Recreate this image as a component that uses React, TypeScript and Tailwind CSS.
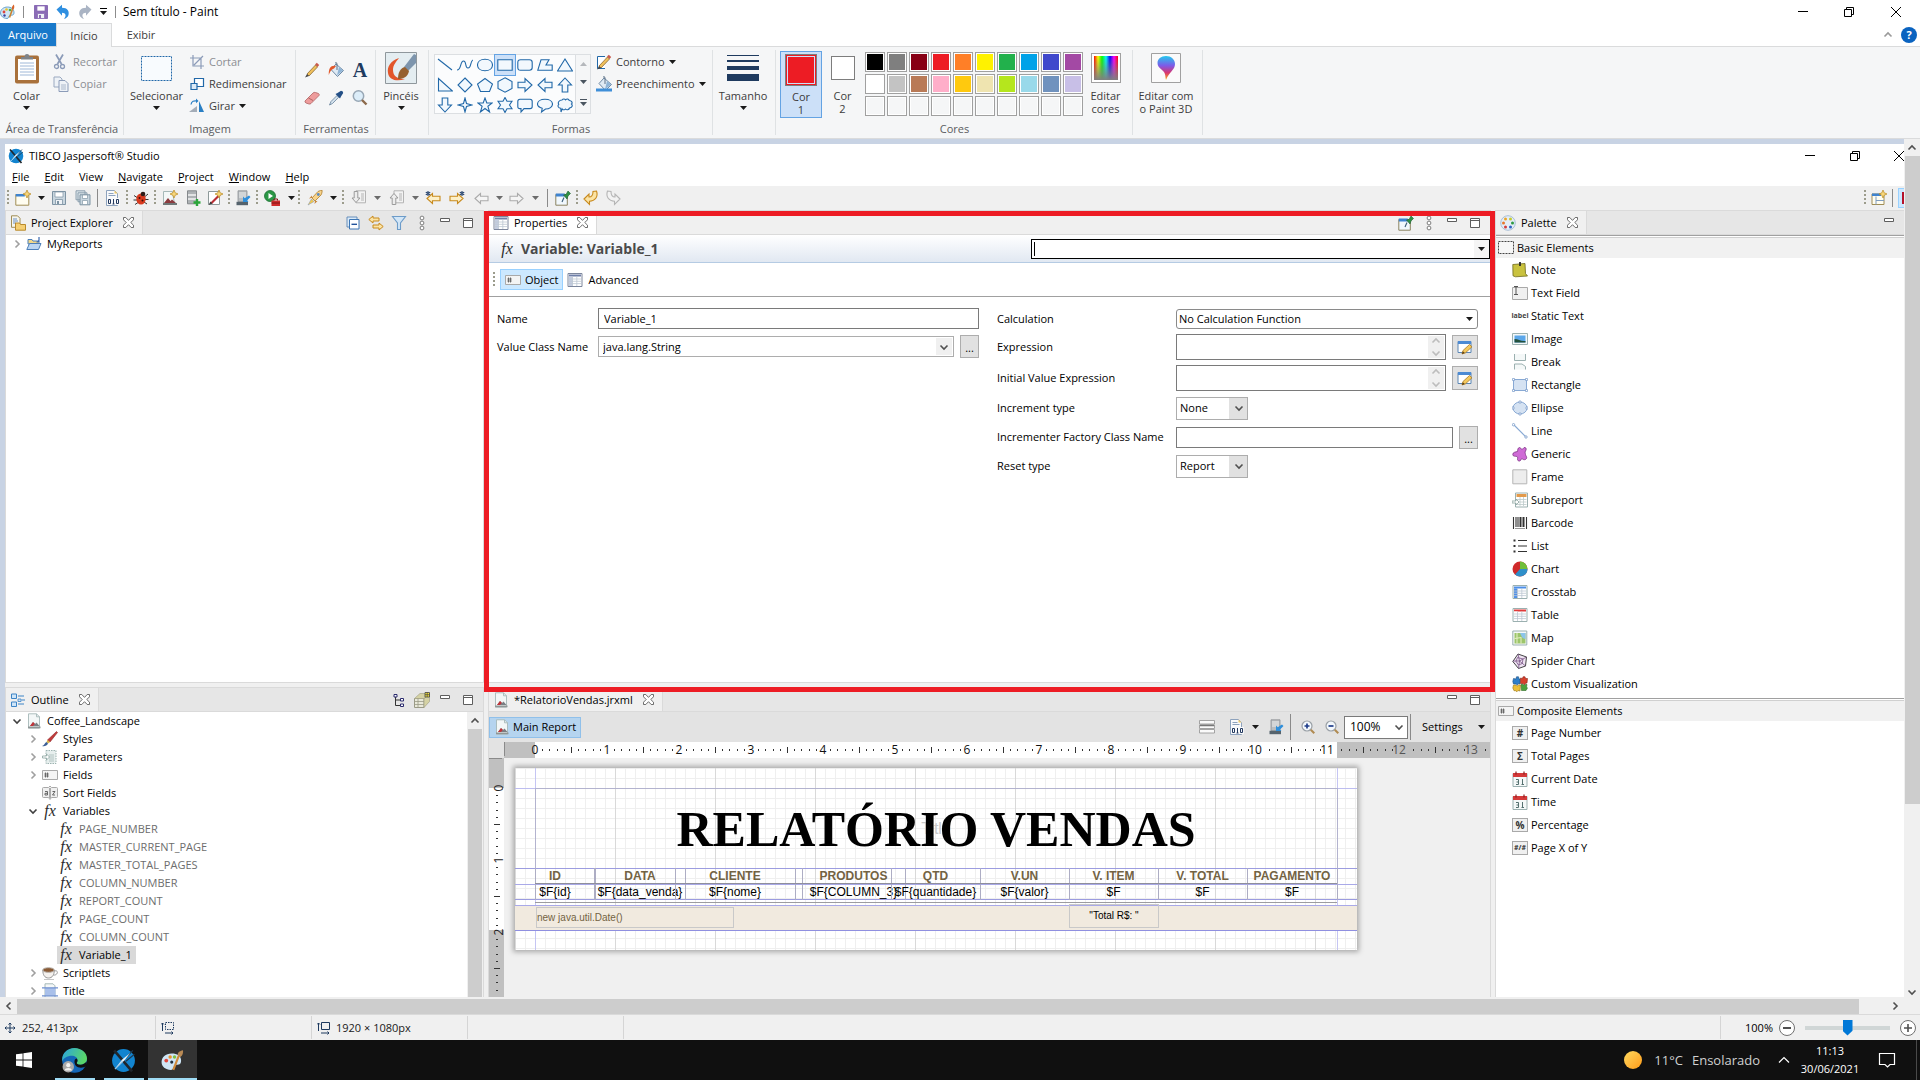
import React from "react";
import type { ReactNode } from "react";

/* ---------- drawing helpers ---------- */

const Ico = ({ children, s = 16, vb = "0 0 16 16" }: { children: ReactNode; s?: number; vb?: string }) => (
  <svg width={s} height={s} viewBox={vb} fill="none" className="shrink-0" aria-hidden="true">
    {children}
  </svg>
);

const Down = ({ color = "#1a1a1a" }: { color?: string }) => (
  <svg width="7" height="4" viewBox="0 0 7 4" className="shrink-0" aria-hidden="true">
    <path d="M0 0h7L3.5 4z" fill={color} />
  </svg>
);

const Chevron = ({ dir, color = "#505050" }: { dir: "up" | "down" | "left" | "right"; color?: string }) => {
  const d = {
    up: "M1.5 6.5 5 3l3.500 3.500",
    down: "M1.500 3.500 5 7l3.500-3.500",
    left: "M6.500 1.500 3 5l3.500 3.500",
    right: "M3.500 1.500 7 5 3.500 8.500",
  }[dir];
  return (
    <svg width="10" height="10" viewBox="0 0 10 10" fill="none" className="shrink-0" aria-hidden="true">
      <path d={d} stroke={color} strokeWidth="1.600" />
    </svg>
  );
};

const CloseX = () => (
  <svg width="11" height="11" viewBox="0 0 11 11" fill="#fff" className="shrink-0" aria-hidden="true">
    <path
      d="M.5.5h2.300L5.500 3.400 8.200.5h2.300v2.300L7.800 5.500l2.700 2.700v2.300H8.200L5.500 7.700 2.800 10.500H.5V8.200l2.700-2.700L.5 2.800z"
      stroke="#5c5c5c"
      strokeWidth="0.900"
    />
  </svg>
);

const Palette = () => (
  <Ico>
    <path d="M7.500 3C3.500 3 .5 5.500.5 8.800S3.500 14.500 7 14.500c2 0 1.200-2 2.500-2.800 1.400-.9 4.500.3 4.500-3C14 5 11 3 7.500 3z" fill="#cfe6f6" stroke="#4b90c2" strokeWidth=".8" />
    <circle cx="4" cy="8" r="1.400" fill="#e0463c" />
    <circle cx="6.500" cy="5.500" r="1.300" fill="#e9c22b" />
    <circle cx="10" cy="6" r="1.300" fill="#4fae46" />
    <circle cx="4.500" cy="11.500" r="1.200" fill="#3a3f9f" />
    <path d="M9.500 13.500 12.500 5" stroke="#c98231" strokeWidth="1.600" />
    <path d="M12 5c-.6-2 .6-3 1.800-4.500.7 1.500.8 3.500-.3 5z" fill="#d9642a" />
  </Ico>
);

const Jasper = ({ s = 16 }: { s?: number }) => (
  <Ico s={s}>
    <circle cx="8" cy="8" r="7.300" fill="#1284cf" />
    <path d="M14 1.500 9.500 6.500M15 4 9.500 8.500" stroke="#1d3a52" strokeWidth=".8" />
    <path d="M2 1.500 13.500 15" stroke="#20262c" strokeWidth="1.700" />
    <path d="M12.500 3 8.500 8 2.500 13.500 7 7.500z" fill="#e8f4fb" />
    <path d="M7.500 8.500 2.500 13.500" stroke="#9fc9e6" strokeWidth=".8" />
  </Ico>
);

const Save = ({ color = "#8a6bb5", fill = "#8a6bb5" }: { color?: string; fill?: string }) => (
  <Ico>
    <path d="M1.500 1.500h13v13h-13z" fill={fill} stroke={color} />
    <path d="M4 2h8v5H4z" fill="#fff" stroke={color} strokeWidth=".7" />
    <path d="M4.500 9.500h7v5h-7z" fill="#eef2f6" stroke={color} strokeWidth=".8" />
    <path d="M6 11h2v3H6z" fill={color} />
  </Ico>
);

const SaveAll = () => (
  <Ico>
    <path d="M1 .8h9v9H1zM3 2.800h9v9H3z" fill="#dbe4ea" stroke="#8499a8" strokeWidth=".9" />
    <path d="M5 4.800h10v10H5z" fill="#c9d6df" stroke="#7d93a3" />
    <path d="M7.500 5h5v3.500h-5zM7.500 10.500h5v4h-5z" fill="#fff" stroke="#8499a8" strokeWidth=".7" />
  </Ico>
);

const Arrow = ({ flip, color }: { flip?: boolean; color: string }) => (
  <Ico>
    <g transform={flip ? "translate(16 0) scale(-1 1)" : undefined}>
      <path d="M1.500 5.500 7 .8v3c5.500 0 7.500 3.500 6.500 7.200-.6 2-2.500 3.500-4.500 4 2.600-3 2-6.200-2-6.200v3z" fill={color} />
    </g>
  </Ico>
);

const Doc = ({ children }: { children?: ReactNode }) => (
  <Ico>
    <path d="M2.500.8h8l3 3v11.400h-11z" fill="#f3f7f7" stroke="#a5b8b8" strokeWidth=".9" />
    <path d="M10.500.8v3h3" stroke="#a5b8b8" strokeWidth=".9" />
    {children}
  </Ico>
);

const Report = () => (
  <Doc>
    <path d="m4 13 3-4 2 2 1.500-1.500 3 3.500z" fill="#7a7f83" />
    <path d="m4 13 3-4 1.800 1.800L7 13z" fill="#c2343a" />
    <path d="M2 13.500h12.500v1.700H2z" fill="#8f9696" />
  </Doc>
);

const Doc010 = () => (
  <Ico>
    <path d="M2.500.5h8l3 3v12h-11z" fill="#f8f9fb" stroke="#8da2bd" />
    <path d="M10.500.5v3h3z" fill="#f0c969" />
    <path d="M4.500 3.500h5M4.500 5.500h7" stroke="#8da2bd" />
    <path d="M3.200 8h12.600v7H3.200z" fill="#f8f9fb" />
    <path d="M4.500 9.500h2v4h-2zM9.500 9v5M8.500 14h2M12.500 9.500h2v4h-2z" stroke="#23395f" />
  </Ico>
);

const Computer = () => (
  <Ico>
    <path d="M3 .8h9v11H3z" fill="#b9bdc0" stroke="#8b9094" strokeWidth=".8" />
    <path d="M4 3h7M4 5h7M4 7h7" stroke="#eceeef" />
    <path d="M1.500 11.800h11.500v3.400H1.500z" fill="#55636d" />
    <path d="m14 5.500 1.500 1.500-3.500 3.500 1.500 1.500H8V6.500L9.700 8.200z" fill="#2f8fdb" />
  </Ico>
);

const Pin = () => (
  <Ico>
    <path d="M.8 4.500h11.500v10.700H.8z" fill="#f1f8fd" stroke="#8a8360" />
    <path d="M.8 3.500h9v3h-9z" fill="#3e83cf" />
    <path d="m7 12 2-4.500" stroke="#3b5c78" strokeWidth="1.100" />
    <path d="m8.500 5 2.500-.5L13 1l2.500 2.500-2.500 2.500-1 3z" fill="#2e8f46" stroke="#20622f" strokeWidth=".6" />
  </Ico>
);

const Dots = () => (
  <Ico>
    <g stroke="#707070" strokeWidth=".9" fill="#fff">
      <circle cx="8" cy="3" r="1.900" />
      <circle cx="8" cy="8" r="1.900" />
      <circle cx="8" cy="13" r="1.900" />
    </g>
  </Ico>
);
const Min = () => (
  <Ico>
    <path d="M3.500 3.500h9v3h-9z" fill="#fff" stroke="#5e5e5e" />
  </Ico>
);
const Max = () => (
  <Ico>
    <path d="M3.500 3.500h9v9h-9z" fill="#fff" stroke="#5e5e5e" />
    <path d="M3.500 5.500h9" stroke="#5e5e5e" />
  </Ico>
);

const Fx = () => <span className="w-4 shrink-0 text-center font-['Liberation_Serif',serif] text-[16px] leading-4 text-[#2c2c2c] italic">fx</span>;

const HashField = () => (
  <Ico>
    <path d="M.5 3.500h15v9H.5z" fill="#f4f4f4" stroke="#a9a9a9" />
    <path d="M3.500 5.500v5M5.500 5.500v5M2.300 7h4.500M2.300 9h4.500" stroke="#555" strokeWidth=".8" />
  </Ico>
);

const GridIcon = ({ head = "#6f7fa8", side = "#c5cde0", border = "#7c869c" }: { head?: string; side?: string; border?: string }) => (
  <Ico>
    <path d="M1 1.500h14v13H1z" fill="#fff" stroke={border} />
    <path d="M2 2.500h12v2H2z" fill={head} />
    <path d="M2 4.500h3.500V14H2z" fill={side} />
    <path d="M2 7h12M2 9.300h12M2 11.600h12M5.500 4.500V14M9.800 4.500V14" stroke="#bcc6d2" strokeWidth=".8" />
  </Ico>
);

/* ---------- Paint ribbon ---------- */

const Drop = () => (
  <span className="flex h-3 items-center justify-center">
    <Down />
  </span>
);

const Group = ({ label, width, children }: { label: string; width: string; children: ReactNode }) => (
  <section className={`relative flex shrink-0 flex-col pb-[1px] ${width}`}>
    <div className="flex flex-1">{children}</div>
    <div className="h-4 text-center text-[#5a5c60]">{label}</div>
    <i className="absolute top-[2px] right-0 bottom-[3px] w-px bg-[#dfe2e4]" />
  </section>
);

const BigButton = ({ icon, lines, drop, className = "" }: { icon: ReactNode; lines: string[]; drop?: boolean; className?: string }) => (
  <button className={`flex shrink-0 flex-col items-center pt-[3px] leading-[13px] ${className}`}>
    <span className="flex h-[38px] items-center justify-center pb-1">{icon}</span>
    {lines.map((l) => (
      <span key={l} className="whitespace-nowrap">{l}</span>
    ))}
    {drop && <Drop />}
  </button>
);

const SmallButton = ({ icon, label, drop, muted }: { icon: ReactNode; label: string; drop?: boolean; muted?: boolean }) => (
  <button className={`flex h-[22px] items-center gap-1 whitespace-nowrap ${muted ? "text-[#8c8e93]" : "text-[#3c3c3c]"}`}>
    {icon}
    {label}
    {drop && <Down />}
  </button>
);

const shapes = [
  "M1 2l14 11",
  "M0 13c4.500 0 3-9 6.500-9s1 7 4.500 7 2-7 5-8",
  "M8 2.200c4.500 0 7.500 2.400 7.500 5.800s-3 5.800-7.500 5.800S.5 11.400.5 8s3-5.800 7.500-5.800z",
  "M.8 2.800h14.400v10.400H.8z",
  "M3.500 2.800h9q2.700 0 2.700 2.700v5q0 2.700-2.700 2.700h-9Q.8 13.200.8 10.500v-5Q.8 2.800 3.500 2.800z",
  "M4 2.800h8L9 8h6.200v5.200H.8z",
  "M8 2 15.500 14H.5z",
  "M1.500 1.500v12.500h14z",
  "M8 1 15 8 8 15 1 8z",
  "M8 1.500l7.500 5.500-3 7.500h-9L.5 7z",
  "M8 .8l7 3.700v7l-7 3.700-7-3.700v-7z",
  "M1 5.200h7V1.500L15 8l-7 6.500v-3.700H1z",
  "M15 5.200H8V1.500L1 8l7 6.500v-3.700h7z",
  "M5.200 15V8H1.500L8 1l6.500 7h-3.700v7z",
  "M5.200 1v7H1.500L8 15l6.500-7h-3.700V1z",
  "M8 1 9.500 6.500 15 8 9.500 9.500 8 15 6.500 9.500 1 8 6.500 6.500z",
  "M8 1 9.800 6h5.400l-4.300 3.300L12.600 15 8 11.500 3.400 15l1.700-5.700L.8 6h5.400z",
  "M8 .5 10 4.300h5L12.500 8l2.500 3.700h-5L8 15.500l-2-3.800H1L3.500 8 1 4.300h5z",
  "M3 2.200h10q2.200 0 2.200 2.200v5q0 2.200-2.200 2.200H7L4 15v-3.400H3Q.8 11.600.8 9.400v-5Q.8 2.200 3 2.200z",
  "M8 2.200c4.500 0 7.500 2.100 7.500 4.900s-3 4.900-7 4.900L4.500 15l.7-3.700C2.500 10.500.5 9.200.5 7.100c0-2.800 3-4.900 7.500-4.900z",
  "M5 3c1-1.500 3-1.200 3.500-.2C10 1.500 12 2 12.200 3.500 14.800 3.500 15.800 6 14.500 7c1.500 1.500.5 4-2 4-.5 2-3 2.200-4 1-1 1.200-2.700 1-3.300 0L4 15l-.2-3.700C1.200 11.300.3 8.800 1.700 7.300.5 5.500 2.200 3 5 3z",
];

const swatches = [
  "bg-black", "bg-[#7f7f7f]", "bg-[#880015]", "bg-[#ed1c24]", "bg-[#ff7f27]", "bg-[#fff200]", "bg-[#22b14c]", "bg-[#00a2e8]", "bg-[#3f48cc]", "bg-[#a349a4]",
  "bg-white", "bg-[#c3c3c3]", "bg-[#b97a57]", "bg-[#ffaec9]", "bg-[#ffc90e]", "bg-[#efe4b0]", "bg-[#b5e61d]", "bg-[#99d9ea]", "bg-[#7092be]", "bg-[#c8bfe7]",
  ...Array(10).fill("bg-[#f5f6f7]"),
];

const PencilShape = () => (
  <g>
    <path d="m3 12 8.500-9 2 2L5 14z" fill="#f0c05c" stroke="#8a6a35" strokeWidth=".8" />
    <path d="M11 2.500 12.800.8 15.200 3 13.500 5z" fill="#c95a4c" />
    <path d="m1 15.500 2-3.500 2 2z" fill="#454545" />
  </g>
);

const BucketShape = () => (
  <g>
    <path d="M8 2 15.500 8.500 9.500 14.500 3 7.500z" fill="#dfeaf4" stroke="#6f8aa5" />
    <path d="M9 13.500 15 8.500 11 5z" fill="#8fb4d6" />
    <path d="M9 8V2Q9 0 7 1" stroke="#5e7388" />
  </g>
);

function Ribbon() {
  return (
    <header className="shrink-0 bg-white">
      <div className="flex h-[23px] items-center">
        <Palette />
        <i className="mx-[7px] h-3 w-px bg-[#8c8c8c]" />
        <div className="flex items-center gap-[6px] pl-[2px]">
          <button aria-label="Salvar"><Save /></button>
          <button aria-label="Desfazer"><Arrow color="#2f8fe0" /></button>
          <button aria-label="Refazer"><Arrow flip color="#aab4c4" /></button>
          <button aria-label="Personalizar" className="flex flex-col items-center gap-[2px] px-px">
            <i className="h-px w-[7px] bg-black" />
            <Down />
          </button>
        </div>
        <i className="mx-[7px] h-3 w-px bg-[#8c8c8c]" />
        <span className="flex-1 text-[12px] whitespace-nowrap text-black">Sem título - Paint</span>
        <div className="flex items-center text-black">
          <button aria-label="Minimizar" className="flex w-[46px] justify-center"><i className="h-px w-[10px] bg-black" /></button>
          <button aria-label="Restaurar" className="flex w-[46px] justify-center">
            <Ico s={12} vb="0 0 12 12"><path d="M1.500 3.500h7v7h-7zM3.500 3.500v-2h7v7h-2" stroke="#000" /></Ico>
          </button>
          <button aria-label="Fechar" className="flex w-12 justify-center">
            <Ico s={12} vb="0 0 12 12"><path d="m1 1 10 10M11 1 1 11" stroke="#000" /></Ico>
          </button>
        </div>
      </div>
      <div className="flex h-6 items-stretch border-b border-[#dadbdc] text-[#3c3c3c]">
        <button className="w-14 bg-[#1979ca] text-white">Arquivo</button>
        <button className="-mb-px w-14 border-x border-t border-[#dadbdc] bg-[#f5f6f7]">Início</button>
        <button className="w-[58px]">Exibir</button>
        <div className="flex flex-1 items-center justify-end gap-2 pr-[3px]">
          <Chevron dir="up" color="#9a9a9a" />
          <button aria-label="Ajuda" className="flex size-4 items-center justify-center rounded-full bg-[#0a63c0] font-bold text-white">?</button>
        </div>
      </div>
      <div className="flex h-[92px] border-b border-[#dadbdc] bg-[#f5f6f7] pt-px text-[#3c3c3c]">
        <Group label="Área de Transferência" width="w-[124px]">
          <BigButton
            className="w-[53px]"
            lines={["Colar"]}
            drop
            icon={
              <svg width="26" height="31" viewBox="0 0 26 31" aria-hidden="true">
                <rect x="1" y="2.500" width="24" height="28" rx="2" fill="#a9713b" />
                <path d="M4 6h18v21H4z" fill="#fff" />
                <path d="M6 10h14M6 13h14M6 16h14M6 19h14M6 22h14" stroke="#9fb8d8" />
                <path d="M7 6.500V4h3.500q0-3 2.500-3t2.500 3H19v2.500z" fill="#7e8389" />
              </svg>
            }
          />
          <div className="flex flex-col pt-[3px]">
            <SmallButton muted label="Recortar" icon={<Ico><path d="M3 .5 8.500 10M10 .5 4.500 10" stroke="#8b9bb8" strokeWidth="1.700" /><circle cx="3.500" cy="12.500" r="2" stroke="#8b9bb8" strokeWidth="1.300" /><circle cx="9.500" cy="12.500" r="2" stroke="#8b9bb8" strokeWidth="1.300" /></Ico>} />
            <SmallButton muted label="Copiar" icon={<Ico><path d="M1 1h6l2 2v8H1z" fill="#eef2f7" stroke="#9aa9c0" /><path d="M6 4.500h6l3 3v8H6z" fill="#eef2f7" stroke="#8b9bb8" /><path d="M8 9h5M8 11h5M8 13h5" stroke="#9aa9c0" strokeWidth=".8" /></Ico>} />
          </div>
        </Group>
        <Group label="Imagem" width="w-[172px]">
          <BigButton
            className="w-[65px]"
            lines={["Selecionar"]}
            drop
            icon={<svg width="31" height="25" viewBox="0 0 31 25" aria-hidden="true"><path d="M.5.5h30v24H.5z" fill="#f8fbfe" stroke="#2168a8" strokeDasharray="2 1" /></svg>}
          />
          <div className="flex flex-col pt-[3px]">
            <SmallButton muted label="Cortar" icon={<Ico><path d="M4 1v11h11M1 4h11v11M5 11l9-9" stroke="#8b9bb8" strokeWidth="1.200" /></Ico>} />
            <SmallButton label="Redimensionar" icon={<Ico><path d="M5.500 2.500h9v8h-9z" fill="#fff" stroke="#2168a8" strokeWidth="1.200" /><path d="M2 7.500h6v6H2z" fill="#dcebf8" stroke="#2168a8" strokeWidth="1.200" /></Ico>} />
            <SmallButton drop label="Girar" icon={<Ico><path d="M10 3v11h5z" fill="#2a7fc4" /><path d="M8 14H0l8-6z" fill="#a4adb8" /><path d="M2 6.500C2.500 3 5 2.500 8 3" stroke="#2a7fc4" strokeWidth="1.200" /><path d="M7 .5 9.500 3 7 5.200z" fill="#2a7fc4" /></Ico>} />
          </div>
        </Group>
        <Group label="Ferramentas" width="w-[80px]">
          <div className="grid flex-1 grid-cols-3 content-start justify-items-center gap-y-3 px-1 pt-[14px]">
            <button aria-label="Lápis"><Ico><PencilShape /></Ico></button>
            <button aria-label="Preencher"><Ico><BucketShape /><path d="M8 4C3 3 .5 6 .8 13 2.500 9 3 7.500 6 6.500z" fill="#e2582a" /></Ico></button>
            <button className="font-['Liberation_Serif',serif] text-[20px] leading-4 font-bold text-[#1e3a5f]">A</button>
            <button aria-label="Borracha"><Ico><path d="M1 11 9 3q1-1 2.500-.5l3 1q1.200.8.5 2L7 13.500q-1 .8-2 .5l-3-1q-1.500-.8-1-2z" fill="#ee9c9c" stroke="#b06464" strokeWidth=".8" /><path d="m4.500 8 4.500 2.500" stroke="#b06464" /></Ico></button>
            <button aria-label="Selecionador de cores"><Ico><path d="m1.500 15 1.500-3.500L9 5.500 10.700 7.200 4.500 13.500z" fill="#d5e3ee" stroke="#627e98" strokeWidth=".8" /><path d="m7.500 4 2-1L13 .8Q15.500 1 15.200 3L13 6.500 12 8.500z" fill="#234f86" /></Ico></button>
            <button aria-label="Lupa"><Ico><circle cx="6.500" cy="6" r="5.200" fill="#dcedf9" stroke="#98a7b5" strokeWidth="1.500" /><path d="m10 10 4.500 4.500" stroke="#8c6a4b" strokeWidth="2.400" /></Ico></button>
          </div>
        </Group>
        <Group label="" width="w-[53px]">
          <BigButton
            className="w-[50px]"
            lines={["Pincéis"]}
            drop
            icon={
              <svg width="32" height="32" viewBox="0 0 32 32" aria-hidden="true">
                <path d="M.5.500h31v31H.5z" fill="#e4edf1" stroke="#8f979c" />
                <path d="M14 6C5 9 2 15 3 21c1 7 9 9 17 6-8 0-12-3-12-9 0-5 3-8 6-12z" fill="#e2562b" />
                <path d="M19 15 29 2l2 1v8L23 19z" fill="#7d95ad" />
                <path d="M13 27c0-6 2-11 7-12l4 4c-1 6-6 8-11 8z" fill="#96602f" />
              </svg>
            }
          />
        </Group>
        <Group label="Formas" width="w-[284px]">
          <div className="flex pt-[6px] pl-[5px]">
            <div className="grid h-[60px] grid-cols-7 border border-[#dcdfe2] bg-[#fbfcfd]">
              {shapes.map((d, i) => (
                <button key={d} aria-label={`Forma ${i + 1}`} className={`flex size-5 items-center justify-center ${i === 3 ? "bg-[#cce0f8] outline outline-[#64a3e3]" : ""}`}>
                  <Ico><path d={d} stroke="#2168a8" strokeWidth="1.100" fill={i < 2 ? "none" : "#f2f8fd"} /></Ico>
                </button>
              ))}
            </div>
            <div className="flex h-[60px] w-[15px] flex-col items-center justify-around border border-l-0 border-[#dcdfe2]">
              <span className="rotate-180"><Down color="#b5b8bc" /></span>
              <Down color="#4a5560" />
              <span className="flex flex-col gap-[2px]"><i className="h-px w-[7px] bg-[#4a5560]" /><Down color="#4a5560" /></span>
            </div>
          </div>
          <div className="flex flex-col pt-[3px] pl-[5px]">
            <SmallButton drop label="Contorno" icon={<Ico><path d="M9 2.500H1.500v12H9" stroke="#2168a8" fill="#fff" /><PencilShape /></Ico>} />
            <SmallButton drop label="Preenchimento" icon={<Ico><BucketShape /><path d="M0 12.500h16v3H0z" fill="#3f8fd8" /></Ico>} />
          </div>
        </Group>
        <Group label="" width="w-[63px]">
          <BigButton
            className="w-[60px]"
            lines={["Tamanho"]}
            drop
            icon={
              <span className="flex w-8 flex-col gap-[4px]">
                <i className="h-px bg-[#1e3a5f]" /><i className="h-[2px] bg-[#1e3a5f]" /><i className="h-1 bg-[#1e3a5f]" /><i className="h-[7px] bg-[#1e3a5f]" />
              </span>
            }
          />
        </Group>
        <Group label="Cores" width="w-[357px]">
          <BigButton
            className="mt-[3px] ml-1 h-[67px] w-[42px] border border-[#64a3e3] bg-[#cce0f8] !pt-0"
            lines={["Cor", "1"]}
            icon={<i className="mt-[2px] size-8 border border-[#7d7d7d] bg-[#ed1c24] outline outline-offset-[-3px] outline-[#cce0f8]" />}
          />
          <BigButton className="w-[41px]" lines={["Cor", "2"]} icon={<i className="size-6 border border-[#7d7d7d] bg-white" />} />
          <div className="grid grid-cols-10 content-start gap-[2px] pt-1 pl-[2px]">
            {swatches.map((c, i) => (
              <button key={i} aria-label={`Cor ${i + 1}`} className="size-5 border border-[#a0a0a0] bg-white p-px"><i className={`block size-full ${c}`} /></button>
            ))}
          </div>
          <BigButton
            className="w-[45px]"
            lines={["Editar", "cores"]}
            icon={
              <i className="size-[30px] border border-[#a0a0a0] bg-white p-[2px]">
                <i className="block size-full bg-[linear-gradient(to_top,#808080,transparent),linear-gradient(to_right,#f00,#ff0,#0f0,#0ff,#00f,#f0f,#f00)]" />
              </i>
            }
          />
        </Group>
        <Group label="" width="w-[70px]">
          <BigButton
            className="w-[66px]"
            lines={["Editar com", "o Paint 3D"]}
            icon={
              <svg width="30" height="30" viewBox="0 0 30 30" aria-hidden="true">
                <defs>
                  <linearGradient id="p3d" x1="0" y1="0" x2="0" y2="1">
                    <stop offset="0" stopColor="#22c9ee" /><stop offset=".4" stopColor="#7d5be8" /><stop offset=".7" stopColor="#d8366f" /><stop offset="1" stopColor="#fbb117" />
                  </linearGradient>
                </defs>
                <path d="M.5.500h29v29H.5z" fill="#fafafa" stroke="#a0a0a0" />
                <path d="M15 3c5 0 9 3.500 9 8 0 6-6 8-9 16-1-4 0-7-4-10-3-2.500-4.500-4-4.500-7C6.500 6 10 3 15 3z" fill="url(#p3d)" />
              </svg>
            }
          />
        </Group>
      </div>
    </header>
  );
}

/* ---------- Studio window ---------- */

const Grip = () => (
  <svg width="2" height="16" viewBox="0 0 2 16" aria-hidden="true"><path d="M1 0v16" stroke="#9c9c8c" strokeWidth="2" strokeDasharray="2 2" /></svg>
);
const Sep = () => <i className="h-[18px] w-px bg-[#8a8a8a]" />;

const GoldArrow = ({ flip, star, color = "#c88a1d", fill = "#fdf0c8" }: { flip?: boolean; star?: boolean; color?: string; fill?: string }) => (
  <Ico>
    <g transform={flip ? "translate(16 0) scale(-1 1)" : undefined}>
      <path d="M2 8.500 7.500 3.500v2.700H15v4.600H7.500v2.700z" fill={fill} stroke={color} strokeWidth="1.100" />
      {star && <path d="M3 1v5M.8 2.200l4.400 2.600M5.200 2.200.8 4.800" stroke="#23406b" strokeWidth="1.100" />}
    </g>
  </Ico>
);
const HookArrow = ({ flip, color, fill }: { flip?: boolean; color: string; fill: string }) => (
  <Ico>
    <g transform={flip ? "translate(16 0) scale(-1 1)" : undefined}>
      <path d="M1 9 6 4v3c3 0 4-1.500 4-5.500L13.500 1c2 6-1.500 10-7 10.200v3.300z" fill={fill} stroke={color} strokeWidth="1.100" />
    </g>
  </Ico>
);
const Star = () => <path d="m12 0 1.200 2.800L16 4l-2.800 1.200L12 8l-1.200-2.800L8 4l2.800-1.200z" fill="#f6d67c" stroke="#b98a20" strokeWidth=".7" />;
const PageStep = ({ up }: { up?: boolean }) => (
  <Ico>
    <path d="M5 .8h9.500v12H5z" fill="#f3f3f3" stroke="#b4b4b4" />
    <path d="M10 4h3M10 6h3M10 8h3M10 10h3" stroke="#b4b4b4" />
    <path d={up ? "M5 3.500 9 8H6.800v6.500H3.200V8H1z" : "M5 12.500 9 8H6.800V1.500H3.200V8H1z"} fill="#ededed" stroke="#9b9b9b" />
  </Ico>
);

const toolbar: { w: string; node: ReactNode; name?: string }[] = [
  { w: "w-[6px]", node: <Grip /> },
  { w: "w-6", name: "New", node: <Ico><path d="M.8 4.500h13v10.700H.8z" fill="#fffdf0" stroke="#a08d55" /><path d="M.8 4h9v2.500h-9z" fill="#3e83cf" /><Star /></Ico> },
  { w: "w-3", name: "New options", node: <Down /> },
  { w: "w-6", name: "Save", node: <Save color="#7d93a3" fill="#c9d6df" /> },
  { w: "w-6", name: "Save all", node: <SaveAll /> },
  { w: "w-1", node: <Sep /> },
  { w: "w-[26px]", name: "Compile", node: <Doc010 /> },
  { w: "w-1", node: <Grip /> },
  { w: "w-6", name: "Debug", node: <Ico><path d="M1 5.500l3 2M15 4l-3 2.500M.5 10H4M15.500 9.500H12M2 14.500l3-2M14 14l-3-2" stroke="#333" /><ellipse cx="8" cy="9" rx="4.700" ry="5.500" fill="#d8391e" /><circle cx="10" cy="4" r="2.300" fill="#2e1a16" /><circle cx="6.500" cy="8" r="1" fill="#3a0f08" /><circle cx="9.500" cy="10.500" r="1" fill="#3a0f08" /></Ico> },
  { w: "w-1", node: <Grip /> },
  { w: "w-[26px]", name: "New report", node: <Ico><path d="M1.500 1.500h9l2 12.500h-11z" fill="#f3f7f7" stroke="#a5b8b8" /><path d="m2 13 4-5 2.500 3L10 9.500l4 3.500z" fill="#8b3a3e" /><path d="M1 13h14v2H1z" fill="#6f7777" /><Star /></Ico> },
  { w: "w-5", name: "New data adapter", node: <Ico><path d="M2.500.8h9v13h-9z" fill="#aeb2b5" stroke="#85898c" /><path d="M3 5h8M3 9h8" stroke="#f3f3f3" strokeWidth="1.300" /><path d="M12 9v7M8.500 12.500h7" stroke="#2ba53a" strokeWidth="2.400" /></Ico> },
  { w: "w-6", name: "New style", node: <Ico><path d="M1.500 1.500h11v13h-11z" fill="#fff" stroke="#8e9a9a" /><path d="m3 13 9-9 1.500 1.500L5 14z" fill="#b92f35" /><path d="m1.500 15 2-3.500 2 2z" fill="#3a3a3a" /><Star /></Ico> },
  { w: "w-1", node: <Grip /> },
  { w: "w-6", name: "Preview", node: <Computer /> },
  { w: "w-1", node: <Grip /> },
  { w: "w-[26px]", name: "Run", node: <Ico><circle cx="6" cy="6" r="5.500" fill="#2b9746" stroke="#1e7034" strokeWidth=".8" /><path d="m4.500 3 4.500 3-4.500 3z" fill="#fff" /><path d="M7.500 10.500H16V16H7.500z" fill="#cf2a2a" /><path d="M10 10.500V9h3.500v1.500M7.500 13H16" stroke="#7b1414" /></Ico> },
  { w: "w-3", name: "Run options", node: <Down /> },
  { w: "w-1", node: <Grip /> },
  { w: "w-7", name: "Launch", node: <Ico><path d="m5 8 6-6.500q3-1.500 4.200-1-.2 3-1.200 4.500L8 11z" fill="#f7d38c" stroke="#b98a3a" strokeWidth=".9" /><circle cx="11.300" cy="4.500" r="1.400" fill="#5b8bc4" /><path d="m5 8-3 .5L5 5.500zM8 11l-.5 3L10.500 11z" fill="#c8853a" /><path d="m1 15 3.500-6L7 11.500z" fill="#f6c948" stroke="#8fa0b3" strokeWidth=".6" /></Ico> },
  { w: "w-2", name: "Launch options", node: <Down /> },
  { w: "w-3", node: <Grip /> },
  { w: "w-5", name: "Next annotation", node: <PageStep /> },
  { w: "w-4", name: "Next options", node: <Down color="#6b6b6b" /> },
  { w: "w-6", name: "Previous annotation", node: <PageStep up /> },
  { w: "w-3", name: "Previous options", node: <Down color="#6b6b6b" /> },
  { w: "w-6", name: "Previous edit", node: <GoldArrow star /> },
  { w: "w-6", name: "Next edit", node: <GoldArrow flip star /> },
  { w: "w-6", name: "Back", node: <GoldArrow color="#ababab" fill="#f5f5f5" /> },
  { w: "w-3", name: "Back options", node: <Down color="#6b6b6b" /> },
  { w: "w-6", name: "Forward", node: <GoldArrow flip color="#ababab" fill="#f5f5f5" /> },
  { w: "w-3", name: "Forward options", node: <Down color="#6b6b6b" /> },
  { w: "w-3", node: <Sep /> },
  { w: "w-5", name: "Pin editor", node: <Pin /> },
  { w: "w-2", node: <Grip /> },
  { w: "w-5", name: "Undo", node: <HookArrow color="#c88a1d" fill="#fbe3a4" /> },
  { w: "w-6", name: "Redo", node: <HookArrow flip color="#b5b5b5" fill="#f3f3f3" /> },
];

const menus = ["File", "Edit", "View", "Navigate", "Project", "Window", "Help"];

function PanelHead({ icon, title, actions, tone = "bg-[#f0f0f0]", bar = "bg-[#e6e6e6]" }: { icon: ReactNode; title: string; actions: { name: string; node: ReactNode }[]; tone?: string; bar?: string }) {
  return (
    <div className={`flex h-[25px] shrink-0 items-stretch border-y border-[#dadada] ${bar}`}>
      <div className={`flex items-center gap-[5px] border-r border-[#dadada] pr-2 pl-1 whitespace-nowrap ${tone}`}>
        {icon}
        <span>{title}</span>
        <button aria-label={`Close ${title}`} className="ml-[5px]"><CloseX /></button>
      </div>
      <div className="flex flex-1 items-center justify-end pr-1">
        {actions.map((a) => (
          <button key={a.name} aria-label={a.name} className="flex w-[23px] justify-center">{a.node}</button>
        ))}
      </div>
    </div>
  );
}

const minMax = [
  { name: "Minimize", node: <Min /> },
  { name: "Maximize", node: <Max /> },
];

type Node = { level: number; label: string; icon: ReactNode; open?: boolean; leaf?: boolean; gray?: boolean; sel?: boolean };
const variables = ["PAGE_NUMBER", "MASTER_CURRENT_PAGE", "MASTER_TOTAL_PAGES", "COLUMN_NUMBER", "REPORT_COUNT", "PAGE_COUNT", "COLUMN_COUNT"];
const outline: Node[] = [
  { level: 0, label: "Coffee_Landscape", icon: <Report />, open: true },
  { level: 1, label: "Styles", icon: <Ico><path d="M5.500 9 14.500.5l1 1L8 11z" fill="#c23a3a" stroke="#8d2626" strokeWidth=".6" /><path d="m5.500 9 2.500 2-2 1.500-1.500-1.500z" fill="#d8b24a" /><path d="M0 15c2 0 2.500-3 4.500-4L6 12.500C5 15 2.500 15.500 0 15z" fill="#3c5f96" /></Ico> },
  { level: 1, label: "Parameters", icon: <Ico><path d="M4 1.500h10v13H4z" fill="#e7efee" stroke="#9db3b0" strokeDasharray="1.500 1" /><path d="M7 6h5M7 8h5M7 10h5M7 12h5" stroke="#b3c4c2" /><path d="M.5 7h4V5l3 3-3 3V9h-4z" fill="#fff" stroke="#8aa3a0" strokeWidth=".8" /></Ico> },
  { level: 1, label: "Fields", icon: <HashField /> },
  { level: 1, label: "Sort Fields", leaf: true, icon: <Ico><path d="M.5 3.500q0-1 1-1h5L8 1l1.500 1.500h5q1 0 1 1v8q0 1-1 1h-5L8 14.500 6.500 12.500h-5q-1 0-1-1z" fill="#f0f0f0" stroke="#a9a9a9" /><path d="M3 6.500h2.500V10H3V8.300h2.500M8 3v10M10.500 6.500H13L10.500 10H13" stroke="#666" /></Ico> },
  { level: 1, label: "Variables", icon: <Fx />, open: true },
  ...variables.map((label) => ({ level: 2, label, icon: <Fx />, leaf: true, gray: true })),
  { level: 2, label: "Variable_1", icon: <Fx />, leaf: true, sel: true },
  { level: 1, label: "Scriptlets", icon: <Ico><path d="M.8 5h11.500c0 5-2 8-5.800 8S.8 10 .8 5z" fill="#f4f1ee" stroke="#999" /><ellipse cx="6.500" cy="5" rx="5.700" ry="2.300" fill="#8a5a34" stroke="#b5b0ab" /><path d="M12.200 6c3-.8 4 1 2.500 3-1 1-2 1.200-3.200 1" stroke="#999" /><path d="M2 14.500h10" stroke="#c5c5c5" /></Ico> },
  { level: 1, label: "Title", icon: <Ico><path d="M3 .8h8l2 2v12.400H3z" fill="#f5f8f8" stroke="#a5b8b8" /><path d="M3 5h10.500v7.500H3z" fill="#a9c0ea" /><path d="M0 4.800h16M0 12.800h16" stroke="#6f8fcf" strokeWidth="1.300" /></Ico> },
];

function TreeRow({ n }: { n: Node }) {
  const pad = ["pl-[3px]", "pl-[19px]", "pl-[35px]"][n.level];
  return (
    <li className={`flex h-[18px] items-center ${pad}`} role="treeitem" aria-selected={!!n.sel}>
      <span className="flex w-4 shrink-0 justify-center">{!n.leaf && <Chevron dir={n.open ? "down" : "right"} color={n.open ? "#404040" : "#a0a0a0"} />}</span>
      <span className={`flex h-full items-center gap-[5px] pr-1 pl-[1px] whitespace-nowrap ${n.sel ? "bg-[#d9d9d9]" : ""} ${n.gray ? "text-[#6d6d6d]" : ""}`}>
        {n.icon}
        {n.label}
      </span>
    </li>
  );
}

function LeftColumn() {
  return (
    <div className="flex w-[479px] shrink-0 flex-col gap-1">
      <section className="flex h-[473px] flex-col border-r border-b border-l border-[#dadada] bg-white">
        <PanelHead
          title="Project Explorer"
          icon={<Ico><path d="M1.500.8h6l2.500 2.500v9H1.500z" fill="#f6f6ee" stroke="#a08d55" /><path d="M3 4h4M3 6h5M3 8h3" stroke="#6b8fc4" /><path d="M5.500 8h4l1 1.500h5v5.700h-10z" fill="#f5cf74" stroke="#b98a2c" /></Ico>}
          actions={[
            { name: "Collapse all", node: <Ico><path d="M2 2h10v10H2z" fill="#dcebf8" stroke="#5b86b5" strokeWidth=".9" /><path d="M4.500 4.500h9.500v9.500H4.500z" fill="#fff" stroke="#3e77b5" /><path d="M6.500 9.300h5.500" stroke="#23539b" strokeWidth="1.400" /></Ico> },
            { name: "Link with editor", node: <Ico><path d="M.8 4.500 5 1v2h6v3H5v2zM15.200 11.500 11 8v2H5v3h6v2z" fill="#fbe3a4" stroke="#c88a1d" /></Ico> },
            { name: "Filter", node: <Ico><path d="M1.500 1.500h13L9.500 8v6.500h-3V8z" fill="#d2e6f7" stroke="#6d9cc9" strokeWidth="1.100" /></Ico> },
            { name: "View menu", node: <Dots /> },
            ...minMax,
          ]}
        />
        <ul role="tree">
          <TreeRow n={{ level: 0, label: "MyReports", icon: <Ico><path d="M2 3.500h4l1 1.500h6v3H2z" fill="#f3d889" stroke="#4d7fb8" /><path d="M.8 13.500 3.500 7.500H15l-2.500 6z" fill="#bcd6f2" stroke="#4d7fb8" /><path d="M13 1v3q0 2-2.500 2" stroke="#3a69b0" strokeWidth="1.200" /></Ico> }} />
        </ul>
      </section>
      <section className="flex min-h-0 flex-1 flex-col overflow-hidden border-r border-l border-[#dadada] bg-white">
        <PanelHead
          title="Outline"
          icon={<Ico><path d="M1.500 2h5v4.500h-5zM1.500 10h5v4.500h-5z" fill="#cfe5f8" stroke="#3d84c6" /><path d="M8 4h6M8 12h6M11.500 8H15" stroke="#3d84c6" /><path d="M8 7h3v2.500H8z" fill="#cfe5f8" stroke="#3d84c6" strokeWidth=".8" /></Ico>}
          actions={[
            { name: "Hierarchy", node: <Ico><path d="M4.500 5v8.500H10M4.500 8H10" stroke="#333" /><path d="M3 2.500h3v2.500H3zM9.500 6.500h3V9h-3zM9.500 12h3v2.500h-3z" fill="#fff" stroke="#2b2b6e" /></Ico> },
            { name: "Layers", node: <Ico><path d="M.5 6.500h9.500v9H.5z" fill="#e9e9da" stroke="#9a9a86" /><path d="M.5 6.500 6 1.500h9.500L10 6.500zM10 6.500l5.500-5v8l-5.500 6z" fill="#d5d2a4" stroke="#a5a386" strokeWidth=".7" /><path d="M.5 9.500H10M.5 12.500H10M4 6.500v9" stroke="#9a9a86" strokeWidth=".8" /><path d="M11 .5h4.500V5H11z" fill="#f5e33c" stroke="#444" strokeWidth=".8" /><path d="M13.200.5V5M11 2.700h4.500" stroke="#444" strokeWidth=".7" /></Ico> },
            ...minMax,
          ]}
        />
        <div className="flex min-h-0 flex-1">
          <ul role="tree" className="min-w-0 flex-1 overflow-hidden">
            {outline.map((n) => <TreeRow key={n.label} n={n} />)}
          </ul>
          <div className="flex w-4 shrink-0 flex-col bg-[#f0f0f0]">
            <span className="flex h-[17px] items-center justify-center"><Chevron dir="up" /></span>
            <i className="mx-px flex-1 bg-[#cdcdcd]" />
          </div>
        </div>
      </section>
    </div>
  );
}

/* ---------- Properties ---------- */

const PenWindow = () => (
  <Ico>
    <path d="M1 2.500h13v11H1z" fill="#fff" stroke="#5b86b5" />
    <path d="M1 2h13v3H1z" fill="#4c8ad3" />
    <path d="m5 15 1-3.500 6.500-6 2.500 2.300-6.500 6z" fill="#f5c95d" stroke="#a87822" strokeWidth=".8" />
    <path d="m5 15 .8-2.800 2 1.800z" fill="#5a3c12" />
  </Ico>
);

const boxed = "min-w-0 border border-[#7a7a7a] bg-white px-[5px] outline-none";
const dots = "flex h-[23px] w-[19px] shrink-0 items-end justify-center border border-[#adadad] bg-[#e1e1e1] pb-[3px] leading-3";

const ExprRow = ({ id, label }: { id: string; label: string }) => (
  <div className="flex h-[26px] items-center">
    <label htmlFor={id} className="w-[179px] shrink-0">{label}</label>
    <div className="flex h-full min-w-0 flex-1 border border-[#7a7a7a] bg-white">
      <textarea id={id} className="h-full min-w-0 flex-1 resize-none outline-none" />
      <div className="my-px mr-px flex w-4 flex-col items-center justify-between bg-[#f0f0f0]">
        <Chevron dir="up" color="#bdbdbd" />
        <Chevron dir="down" color="#bdbdbd" />
      </div>
    </div>
    <button aria-label={`Edit ${label}`} className="ml-[6px] flex h-6 w-[26px] shrink-0 items-center justify-center border border-[#adadad] bg-[#e1e1e1]"><PenWindow /></button>
  </div>
);

const SmallSelect = ({ id, label, value }: { id: string; label: string; value: string }) => (
  <div className="flex h-6 items-center">
    <label htmlFor={id} className="w-[179px] shrink-0">{label}</label>
    <div className="relative h-[23px] w-[72px]">
      <select id={id} className="size-full appearance-none border border-[#adadad] bg-[linear-gradient(to_right,#fff_52px,#e1e1e1_52px)] pl-[3px]"><option>{value}</option></select>
      <span className="pointer-events-none absolute inset-y-0 right-1 flex items-center"><Chevron dir="down" /></span>
    </div>
  </div>
);

function Properties() {
  return (
    <section className="flex h-[473px] flex-col border-b border-[#dadada] bg-white">
      <PanelHead
        title="Properties"
        tone="bg-white"
        bar="bg-[#f0f0f0]"
        icon={<GridIcon />}
        actions={[{ name: "Pin view", node: <Pin /> }, { name: "View menu", node: <Dots /> }, ...minMax]}
      />
      <div className="flex h-7 shrink-0 items-center border-b border-[#b5cbe3] bg-linear-to-b from-white to-[#e1e8f2] pl-[10px]">
        <Fx />
        <h1 className="flex-1 pl-[6px] text-[14px] font-bold text-[#4a4a4a]">Variable: Variable_1</h1>
        <div className="flex h-5 w-[459px] items-center border border-black bg-white pl-[2px]">
          <i className="h-[14px] w-px bg-black" />
          <input aria-label="Search property" className="h-full min-w-0 flex-1 bg-transparent outline-none" />
          <button aria-label="Show properties" className="flex h-full w-[15px] items-center justify-center bg-[#f5f5f5]"><Down /></button>
        </div>
      </div>
      <div className="flex h-[34px] shrink-0 items-center border-b border-[#a0a0a0] pl-1">
        <Grip />
        <button className="ml-[5px] flex h-[21px] items-center gap-1 border border-[#99d1ff] bg-[#cce8ff] px-[4px]"><HashField />Object</button>
        <button className="ml-1 flex h-[21px] items-center gap-[5px]"><GridIcon />Advanced</button>
      </div>
      <div className="grid grid-cols-[482px_1fr] gap-x-[18px] pt-[11px] pr-3 pl-2">
        <div className="flex flex-col gap-[6px]">
          <div className="flex h-[21px] items-center">
            <label htmlFor="name" className="w-[101px] shrink-0">Name</label>
            <input id="name" defaultValue="Variable_1" className={`h-full flex-1 ${boxed}`} />
          </div>
          <div className="flex h-[23px] items-center">
            <label htmlFor="vclass" className="w-[101px] shrink-0">Value Class Name</label>
            <div className="relative h-[21px] flex-1">
              <select id="vclass" className="size-full appearance-none border border-[#adadad] bg-white pl-1"><option>java.lang.String</option></select>
              <span className="pointer-events-none absolute inset-y-[2px] right-[2px] flex w-4 items-center justify-center bg-[#f0f0f0]"><Chevron dir="down" /></span>
            </div>
            <button className={`ml-[6px] ${dots}`}>...</button>
          </div>
        </div>
        <div className="flex flex-col gap-[5px]">
          <div className="flex h-[21px] items-center">
            <label htmlFor="calc" className="w-[179px] shrink-0">Calculation</label>
            <div className="relative h-5 flex-1">
              <select id="calc" className="size-full appearance-none rounded-[3px] border border-[#8a8a8a] bg-white pl-[2px]"><option>No Calculation Function</option></select>
              <span className="pointer-events-none absolute inset-y-0 right-[5px] flex items-center"><Down /></span>
            </div>
          </div>
          <ExprRow id="expr" label="Expression" />
          <ExprRow id="init" label="Initial Value Expression" />
          <SmallSelect id="inc" label="Increment type" value="None" />
          <div className="flex h-6 items-center">
            <label htmlFor="fac" className="w-[179px] shrink-0 whitespace-nowrap">Incrementer Factory Class Name</label>
            <input id="fac" className={`h-[21px] flex-1 ${boxed}`} />
            <button className={`ml-[6px] ${dots}`}>...</button>
          </div>
          <SmallSelect id="reset" label="Reset type" value="Report" />
        </div>
      </div>
    </section>
  );
}

/* ---------- Report editor ---------- */

const tenths = (n: number) => Array.from({ length: n }, (_, i) => i).filter((i) => i % 10 !== 0);

function HRuler() {
  return (
    <svg width="986" height="16" viewBox="0 0 986 16" className="shrink-0" role="img" aria-label="Horizontal ruler">
      <path d="M0 0h986v16H0z" fill="#c0c0c0" />
      <path d="M31 0h802v16H31z" fill="#fff" />
      <path d="M.5 0v14" stroke="#8a8a8a" />
      {tenths(137).map((i) => {
        const x = Math.round(31 + i * 7.2);
        if (i > 100 && i % 10 === 1) return null;
        return i % 5 === 0 ? <path key={i} d={`M${x}.5 5v6`} stroke="#333" /> : <path key={i} d={`M${x}.5 7v2`} stroke="#333" />;
      })}
      {Array.from({ length: 14 }, (_, i) => (
        <text key={i} x={31 + i * 72} y="12" fontSize="12" textAnchor="middle" fill={i > 11 ? "#555" : "#111"}>{i}</text>
      ))}
    </svg>
  );
}

function VRuler() {
  return (
    <svg width="15" height="240" viewBox="0 0 15 240" className="shrink-0 overflow-visible" role="img" aria-label="Vertical ruler">
      <path d="M0 0h15v240H0z" fill="#c0c0c0" />
      <path d="M0 30h15v142H0z" fill="#fff" />
      <path d="M0 .5h13" stroke="#8a8a8a" />
      {tenths(30).map((i) => {
        const y = Math.round(30 + i * 7.2);
        return i % 5 === 0 ? <path key={i} d={`M5 ${y}.5h6`} stroke="#333" /> : <path key={i} d={`M7 ${y}.5h2`} stroke="#333" />;
      })}
      {[0, 1, 2].map((i) => (
        <text key={i} transform={`translate(14 ${30 + i * 72}) rotate(-90)`} fontSize="12" textAnchor="middle" fill="#222">{i}</text>
      ))}
    </svg>
  );
}

/* Report elements: place on the 842-wide page, header and field expression. */
const columns = [
  { box: "left-[20px] w-[60px]", text: "left-[20px] w-[40px]", head: "ID", field: "$F{id}" },
  { box: "left-[80px] w-[91px]", text: "left-[80px] w-[90px]", head: "DATA", field: "$F{data_venda}" },
  { box: "left-[160px] w-[121px]", text: "left-[160px] w-[120px]", head: "CLIENTE", field: "$F{nome}" },
  { box: "left-[287px] w-[104px]", text: "left-[287px] w-[103px]", head: "PRODUTOS", field: "$F{COLUMN_3}" },
  { box: "left-[376px] w-[90px]", text: "left-[376px] w-[89px]", head: "QTD", field: "$F{quantidade}" },
  { box: "left-[465px] w-[90px]", text: "left-[465px] w-[89px]", head: "V.UN", field: "$F{valor}" },
  { box: "left-[554px] w-[90px]", text: "left-[554px] w-[89px]", head: "V. ITEM", field: "$F" },
  { box: "left-[643px] w-[90px]", text: "left-[643px] w-[89px]", head: "V. TOTAL", field: "$F" },
  { box: "left-[732px] w-[91px]", text: "left-[732px] w-[90px]", head: "PAGAMENTO", field: "$F" },
];

function ReportPage() {
  return (
    <div className="absolute top-[10px] left-[11px] h-[182px] w-[842px] overflow-visible bg-white bg-[linear-gradient(to_right,#d9d9d9_1px,transparent_1px),linear-gradient(to_right,#efefef_1px,transparent_1px),linear-gradient(to_bottom,#efefef_1px,transparent_1px)] bg-[size:100px_100%,10px_100%,100%_10px] font-['Liberation_Sans',Arial,sans-serif] shadow-[0_0_5px_2px_#a8a8a8]">
      <i className="absolute inset-y-0 left-5 w-px bg-[#c5c5f3]" />
      <i className="absolute inset-y-0 left-[822px] w-px bg-[#c5c5f3]" />
      <i className="absolute inset-x-0 top-5 h-px bg-[#bdbdf0]" />
      <div className="absolute top-5 left-5 h-[81px] w-[803px] border border-[#b3b3cf]" />
      <i className="absolute inset-x-0 top-[100px] h-px bg-[#9c9ce0]" />
      <i className="absolute inset-x-0 top-[116px] h-px bg-[#a9a9e8]" />
      <i className="absolute inset-x-0 top-[131px] h-px bg-[#9c9ce0]" />
      <i className="absolute inset-x-0 top-[137px] h-px bg-[#a9a9e8]" />
      <div className="absolute inset-x-0 top-[138px] h-6 bg-[#f1eadf]" />
      <i className="absolute inset-x-0 top-[162px] h-px bg-[#8f8fe0]" />
      <span className="absolute top-[51px] left-0 w-full text-center text-[16px] leading-5 text-[#c8c8c8]">Title</span>
      <h2 className="absolute top-[32px] left-0 w-full text-center font-['Liberation_Serif','Times_New_Roman',serif] text-[50px] leading-[58px] font-bold whitespace-nowrap text-black">RELATÓRIO VENDAS</h2>
      {columns.map((c) => (
        <React.Fragment key={c.head}>
          <i className={`absolute top-[100px] h-8 border-x border-[#adadc4] ${c.box}`} />
          <span className={`absolute top-[100px] flex h-4 items-center justify-center text-[12px] font-bold whitespace-nowrap text-[#736343] ${c.text}`}>{c.head}</span>
          <span className={`absolute top-[116px] flex h-4 items-center justify-center text-[12px] whitespace-nowrap text-black ${c.text}`}>{c.field}</span>
        </React.Fragment>
      ))}
      <i className="absolute top-[115px] left-5 h-px w-[802px] bg-[#8f8f9c]" />
      <i className="absolute top-[134px] left-5 h-px w-[802px] bg-[#9c9ca0]" />
      <span className="absolute top-[139px] left-[21px] flex h-[21px] w-[198px] items-center border border-[#c9c9c9] text-[10px] text-[#736343]">new java.util.Date()</span>
      <span className="absolute top-[136px] left-[554px] flex h-6 w-[90px] items-center justify-center border border-[#c9c9c9] text-[10px] text-black">"Total R$: "</span>
    </div>
  );
}

function Editor() {
  return (
    <section className="flex min-h-0 flex-1 flex-col overflow-hidden bg-[#e3e3e3]">
      <PanelHead title="*RelatorioVendas.jrxml" icon={<Report />} actions={minMax} />
      <div className="flex h-[30px] shrink-0 items-center">
        <button className="flex h-[21px] items-center gap-[3px] border border-[#90c0ea] bg-[#b5d4ef] px-1 whitespace-nowrap"><Report />Main Report</button>
        <div className="flex flex-1 items-center justify-end">
          <button aria-label="Bands" className="flex w-[29px] justify-center"><Ico><path d="M.5 1.500h15v3.500H.5zM.5 6h15v3.500H.5zM.5 10.500h15V14H.5z" fill="#fafafa" stroke="#9a9a9a" strokeWidth=".9" /><path d="M1 6.500h14" stroke="#777" strokeWidth="1.500" /></Ico></button>
          <button aria-label="Compile" className="flex w-[29px] justify-center"><Doc010 /></button>
          <button aria-label="Compile options" className="flex w-[11px] justify-center"><Down /></button>
          <button aria-label="Preview" className="flex w-[29px] justify-center"><Computer /></button>
          <i className="h-[26px] w-px bg-[#8a8a8a]" />
          <button aria-label="Zoom in" className="ml-[5px] flex w-6 justify-center"><Ico><circle cx="7" cy="7" r="5" fill="#f3f8fc" stroke="#9aa0a6" strokeWidth="1.200" /><path d="M7 4.500v5M4.500 7h5" stroke="#1f3d8a" strokeWidth="1.700" /><path d="m10.800 10.800 3.500 3.500" stroke="#b08b52" strokeWidth="2" /></Ico></button>
          <button aria-label="Zoom out" className="flex w-6 justify-center"><Ico><circle cx="7" cy="7" r="5" fill="#f3f8fc" stroke="#9aa0a6" strokeWidth="1.200" /><path d="M4.500 7h5" stroke="#1f3d8a" strokeWidth="1.700" /><path d="m10.800 10.800 3.500 3.500" stroke="#b08b52" strokeWidth="2" /></Ico></button>
          <div className="relative h-[23px] w-16">
            <select aria-label="Zoom level" className="size-full appearance-none border border-[#7a7a7a] bg-white pl-[5px] text-[12px]"><option>100%</option></select>
            <span className="pointer-events-none absolute inset-y-0 right-1 flex items-center"><Chevron dir="down" /></span>
          </div>
          <i className="ml-[2px] h-[26px] w-px bg-[#8a8a8a]" />
          <button className="flex w-[79px] items-center justify-between pr-[5px] pl-[11px]">Settings<Down /></button>
        </div>
      </div>
      <div className="flex shrink-0 overflow-hidden pl-[15px]"><HRuler /></div>
      <div className="flex min-h-0 flex-1 overflow-hidden bg-[#f0f0f0]">
        <VRuler />
        <div className="relative flex-1"><ReportPage /></div>
      </div>
    </section>
  );
}

/* ---------- Palette ---------- */

const FieldBox = ({ children }: { children: ReactNode }) => (
  <span className="flex h-[14px] w-4 shrink-0 items-center justify-center border border-[#a9a9a9] bg-[#f0f0f0] text-[10px] font-bold leading-3 text-[#333]">{children}</span>
);
const Calendar = () => (
  <Ico>
    <path d="M1 2.500h14v13H1z" fill="#f4f8f8" stroke="#9bb0b0" />
    <path d="M1 2h14v4H1z" fill="#d43a3a" />
    <path d="M4 .5v3M12 .5v3" stroke="#8c2020" strokeWidth="1.200" />
    <path d="M4 8.500h2.500v5H4M4.500 11h2M10.500 8v5.500M9.500 13.500h2.500" stroke="#54706f" />
  </Ico>
);

const basic: [string, ReactNode][] = [
  ["Note", <Ico key="i"><path d="M.8 2.500 13 1.500l.5 10L15.500 14l-12 .8-2.500-1z" fill="#c9c23f" stroke="#6f6a1d" strokeWidth=".8" /><path d="M8 0v4" stroke="#2b2b2b" strokeWidth="1.800" /></Ico>],
  ["Text Field", <Ico key="i"><path d="M.5 2.500h15v12H.5z" fill="#f0f0f0" stroke="#a9a9a9" /><path d="M2 1.500h4M4 1.500v8M2 9.500h4" stroke="#555" /></Ico>],
  ["Static Text", <span key="i" className="flex w-4 shrink-0 justify-center text-[7px] leading-4 font-bold text-[#444]">label</span>],
  ["Image", <Ico key="i"><path d="M.5 2.500h15v11H.5z" fill="#f4f8f8" stroke="#9bb0b0" /><path d="M2.500 4.500h11v7h-11z" fill="#5ba7ea" /><path d="M2.500 8c4 0 6 2.500 11 2v1.500h-11z" fill="#23513c" /></Ico>],
  ["Break", <Ico key="i"><path d="M2.500 0v6.500h11V0M2.500 15.500V10H10l3.500 2.500v3" fill="#f4f8f8" stroke="#9bb0b0" /></Ico>],
  ["Rectangle", <Ico key="i"><path d="M1.500 2.500h13v11h-13z" fill="#d5e2f2" stroke="#88a9d4" /><path d="M.5 1.500h2v2h-2zM13.500 1.500h2v2h-2zM.5 12.500h2v2h-2zM13.500 12.500h2v2h-2z" fill="#fff" stroke="#7699c8" strokeWidth=".7" /></Ico>],
  ["Ellipse", <Ico key="i"><ellipse cx="8" cy="8" rx="7" ry="6" fill="#d5e2f2" stroke="#88a9d4" /><path d="M7 1h2v2H7zM7 13h2v2H7zM0 7h2v2H0zM14 7h2v2h-2z" fill="#fff" stroke="#7699c8" strokeWidth=".7" /></Ico>],
  ["Line", <Ico key="i"><path d="m2 2 12 12" stroke="#88a9d4" strokeWidth="1.100" /><circle cx="1.500" cy="1.700" r="1.200" fill="#fff" stroke="#7699c8" strokeWidth=".8" /><circle cx="14" cy="14" r="1.200" fill="#fff" stroke="#7699c8" strokeWidth=".8" /></Ico>],
  ["Generic", <Ico key="i"><path d="M5.500 5.500C6 3.500 5.500 2 7.500 1.500c1.500 0 1.500 2 2.500 2s1.500-2.500 3-2 1.500 2 .5 3.500 0 2.500 0 3.500 1.800 2.500 1 4-3 1.500-4 .5-1.500.5-2 1.500-3 .5-3-1 .5-2.500-.5-3S.8 11 .8 8.500s3-2.500 4.700-3z" fill="#cf6bd6" stroke="#7d3585" strokeWidth=".8" /></Ico>],
  ["Frame", <Ico key="i"><path d="M.8.8h14v14H.8z" fill="#ededed" stroke="#b5b5b5" /></Ico>],
  ["Subreport", <Ico key="i"><path d="M3.500 1h12v14h-12z" fill="#fff" stroke="#9bb0b0" /><path d="M4.500 2h10v3h-10z" fill="#e39a4b" /><path d="M4.500 7.500h10M4.500 10h10M4.500 12.500h10M8 5v9M11.500 5v9" stroke="#bccaca" strokeWidth=".8" /><path d="M0 9h4V7l3 3-3 3v-2H0z" fill="#fff" stroke="#8aa3a0" strokeWidth=".8" /></Ico>],
  ["Barcode", <Ico key="i"><path d="M1.500 2v12M4 2v10M6 2v10M14.500 2v12" stroke="#333" strokeWidth="1.100" /><path d="M8.500 2v10M11.500 2v10" stroke="#333" strokeWidth="2" /><path d="M3.500 13.500h9.500" stroke="#333" strokeDasharray="1 1" /></Ico>],
  ["List", <Ico key="i"><path d="M6 2.500h9M6 8h9M6 13.500h9" stroke="#333" strokeWidth="1.200" /><path d="M1.500 1.500h2v2h-2zM1.500 7h2v2h-2zM1.500 12.500h2v2h-2z" fill="#333" /></Ico>],
  ["Chart", <Ico key="i"><circle cx="8" cy="8" r="7.500" fill="#cf2a2a" /><path d="M8 8V.5A7.500 7.500 0 0 1 15.500 8z" fill="#6fbf3a" /><path d="M8 8h7.500A7.500 7.500 0 0 1 3 13.500z" fill="#2f8fc9" /></Ico>],
  ["Crosstab", <GridIcon key="i" head="#4d8fe8" side="#4d8fe8" border="#9bb0b0" />],
  ["Table", <GridIcon key="i" head="#e03a3a" side="#ffffff" border="#9bb0b0" />],
  ["Map", <Ico key="i"><path d="M.8 1h14v14H.8z" fill="#f4f8f8" stroke="#9bb0b0" /><path d="M2.500 3h11v10.500h-11z" fill="#9cc56a" /><path d="M8 3h5.500v6C10 8.500 9.500 6 8 3z" fill="#8cc4ea" /><path d="M5 3v10.500M2.500 8.500l7-1M9 8v5.500" stroke="#e6efc4" /></Ico>],
  ["Spider Chart", <Ico key="i"><path d="M6 1l8.500 3L13.500 13l-7 2.500L.8 8.500z" fill="#eee3f1" stroke="#444" /><path d="M6 1l1.500 7M14.500 4l-7 4 6 5M7.500 8l-1 7.500M7.500 8H.8M5.500 4.500l5.500 1.500-.8 4.500-3.700 1.500L4 8.300z" stroke="#7a5488" strokeWidth=".8" /></Ico>],
  ["Custom Visualization", <Ico key="i"><path d="M1.500 2.500 4 3 4.500.8h2L7 3h1v5L6 7.500 5.500 9 4 8H1.500L.8 5.500z" fill="#2f7fc9" stroke="#1d4f82" strokeWidth=".6" /><path d="M8.500 2l2 .5L11 .8h2L13.500 2.500h2L15 7l-2 .5-.5 1.500L11 7.500H8.500z" fill="#d8402c" stroke="#87251a" strokeWidth=".6" /><path d="M9 8.500h2l1.500 1 1-1H15l-.5 2.500 1 1-1.500 2.500H9.500z" fill="#4ba23c" stroke="#2f6b25" strokeWidth=".6" /><path d="M1.500 9H4l1 1.200L6.500 9H8.500l-.5 6-2-.5-1 1.200-1.500-1H2L.8 12z" fill="#eebf37" stroke="#93741a" strokeWidth=".6" /></Ico>],
];
const composite: [string, ReactNode][] = [
  ["Page Number", <FieldBox key="i">#</FieldBox>],
  ["Total Pages", <FieldBox key="i">Σ</FieldBox>],
  ["Current Date", <Calendar key="i" />],
  ["Time", <Calendar key="i" />],
  ["Percentage", <FieldBox key="i">%</FieldBox>],
  ["Page X of Y", <FieldBox key="i"><span className="text-[7px]">#/#</span></FieldBox>],
];

const Drawer = ({ title, icon, items }: { title: string; icon: ReactNode; items: [string, ReactNode][] }) => (
  <div className="border-t border-[#a0a0a0]">
    <div className="mt-px flex h-[21px] items-center gap-[3px] border-t border-[#d0d0d0] bg-[#f1f1f1] pl-[2px]">{icon}{title}</div>
    <ul>
      {items.map(([label, ic]) => (
        <li key={label} className="h-[23px]"><button className="flex h-full items-center gap-[3px] pl-4 whitespace-nowrap">{ic}{label}</button></li>
      ))}
    </ul>
  </div>
);

function PalettePanel() {
  return (
    <section className="flex w-[409px] shrink-0 flex-col overflow-hidden border-l border-[#dadada] bg-white">
      <PanelHead
        title="Palette"
        icon={<Ico><circle cx="8" cy="8" r="7.300" fill="#e4edf6" stroke="#a9bfd6" /><circle cx="5.500" cy="4" r="1.500" fill="#e9a52b" /><circle cx="10.500" cy="4" r="1.500" fill="#c4cc2e" /><circle cx="12.500" cy="8" r="1.500" fill="#2e9a41" /><circle cx="10.500" cy="12" r="1.500" fill="#2f62c4" /><circle cx="5.500" cy="12" r="1.500" fill="#d23b3b" /><circle cx="3.500" cy="8" r="1.500" fill="#e8782b" /></Ico>}
        actions={[{ name: "Minimize", node: <Min /> }]}
      />
      <div className="flex flex-col gap-[3px]">
        <Drawer title="Basic Elements" icon={<Ico><path d="M.5 1.500h15v12H.5z" stroke="#444" strokeDasharray="2 1" fill="#f6f6f6" /></Ico>} items={basic} />
        <Drawer title="Composite Elements" icon={<HashField />} items={composite} />
      </div>
    </section>
  );
}

function Studio() {
  return (
    <div className="flex min-w-0 flex-1 flex-col overflow-hidden bg-[#f0f0f0] text-black">
      <div className="flex h-[23px] shrink-0 items-center gap-[5px] bg-white pl-[3px]">
        <Jasper />
        <span className="flex-1 whitespace-nowrap">TIBCO Jaspersoft® Studio</span>
        <div className="flex items-center">
          <button aria-label="Minimize window" className="flex w-[45px] justify-center"><i className="h-px w-[10px] bg-black" /></button>
          <button aria-label="Restore window" className="flex w-[45px] justify-center"><Ico s={12} vb="0 0 12 12"><path d="M1.500 3.500h7v7h-7zM3.500 3.500v-2h7v7h-2" stroke="#000" /></Ico></button>
          <button aria-label="Close window" className="-mr-px ml-4 flex"><Ico s={12} vb="0 0 12 12"><path d="m1 1 10 10M11 1 1 11" stroke="#000" /></Ico></button>
        </div>
      </div>
      <nav className="flex h-[19px] shrink-0 items-center gap-[15px] bg-white pl-[7px]">
        {menus.map((m) => (
          <button key={m}>{m === "View" ? m : <><u>{m[0]}</u>{m.slice(1)}</>}</button>
        ))}
      </nav>
      <div className="flex h-6 shrink-0 items-center">
        {toolbar.map((t, i) =>
          t.name ? (
            <button key={i} aria-label={t.name} className={`flex shrink-0 justify-center ${t.w}`}>{t.node}</button>
          ) : (
            <span key={i} className={`flex shrink-0 justify-center ${t.w}`}>{t.node}</span>
          ),
        )}
        <div className="flex flex-1 items-center justify-end gap-[5px]">
          <Grip />
          <button aria-label="Open perspective"><Ico><path d="M1 4h12v10.500H1z" fill="#fffdf0" stroke="#a08d55" /><path d="M1 3.500h9V6H1z" fill="#3e83cf" /><path d="M5 6.500v8M5 10.500h8" stroke="#7f9cbf" /><Star /></Ico></button>
          <Sep />
          <button aria-label="Report design" className="h-5 w-[6px] border border-r-0 border-[#99d1ff] bg-[#cce8ff] py-[3px] pl-[3px]"><i className="block h-full w-[2px] bg-[#b5122a]" /></button>
        </div>
      </div>
      <div className="flex min-h-0 flex-1">
        <LeftColumn />
        <div className="relative ml-1 flex min-w-0 flex-1 flex-col gap-1 border-x border-[#dadada]">
          <Properties />
          <Editor />
          <div className="pointer-events-none absolute top-px -right-[5px] -left-[5px] h-[481px] border-[5px] border-[#ed1c24]" />
        </div>
        <div className="w-1 shrink-0" />
        <PalettePanel />
      </div>
    </div>
  );
}

/* ---------- Paint status bar and Windows taskbar ---------- */

function StatusBar() {
  const cell = "flex h-full w-[156px] items-center border-r border-[#d5d5d5] text-[#1a1a1a]";
  return (
    <footer className="flex h-[26px] shrink-0 items-center border-t border-[#dadada] bg-[#f0f0f0] py-px">
      <div className={`${cell} gap-[6px] pl-1`}>
        <Ico s={12} vb="0 0 12 12"><path d="M6 1v10M1 6h10M4.500 2.500 6 1l1.500 1.500M4.500 9.500 6 11l1.500-1.500M2.500 4.500 1 6l1.500 1.500M9.500 4.500 11 6 9.500 7.500" stroke="#1e3a5f" /></Ico>
        252, 413px
      </div>
      <div className={`${cell} pl-[5px]`}><Ico s={14} vb="0 0 14 14"><path d="M4.500 1.500h8v7h-8z" stroke="#1e3a5f" strokeDasharray="1.500 1" /><path d="M1.500 10V2M0 3.500 1.500 2 3 3.500M4 12h8M10.500 10.500 12 12l-1.500 1.500" stroke="#1e3a5f" /></Ico></div>
      <div className={`${cell} gap-[5px] pl-[5px]`}><Ico s={14} vb="0 0 14 14"><path d="M4.500 1.500h8v7h-8z" stroke="#1e3a5f" /><path d="M1.500 10V2M0 3.500 1.500 2 3 3.500M4 12h8M10.500 10.500 12 12l-1.500 1.500" stroke="#1e3a5f" /></Ico>1920 × 1080px</div>
      <div className={cell} />
      <div className="flex h-full flex-1 items-center border-r border-[#d5d5d5]" />
      <div className="flex h-full w-[199px] items-center justify-end gap-[6px] pr-1">
        <span>100%</span>
        <button aria-label="Reduzir" className="flex size-4 items-center justify-center rounded-full border border-[#707070] bg-white"><i className="h-[2px] w-2 bg-[#505050]" /></button>
        <input
          type="range"
          aria-label="Zoom"
          defaultValue={50}
          className="mx-1 h-4 w-[85px] appearance-none bg-[linear-gradient(#d0d6d6,#d0d6d6)] bg-[size:100%_4px] bg-center bg-no-repeat [&::-webkit-slider-thumb]:h-4 [&::-webkit-slider-thumb]:w-[10px] [&::-webkit-slider-thumb]:appearance-none [&::-webkit-slider-thumb]:bg-[#0078d7] [&::-webkit-slider-thumb]:[clip-path:polygon(0_0,100%_0,100%_70%,50%_100%,0_70%)]"
        />
        <button aria-label="Ampliar" className="flex size-4 items-center justify-center rounded-full border border-[#707070] bg-white"><Ico s={10} vb="0 0 10 10"><path d="M5 1v8M1 5h8" stroke="#505050" strokeWidth="1.600" /></Ico></button>
      </div>
    </footer>
  );
}

function Taskbar() {
  const app = "flex h-full w-[49px] items-center justify-center";
  return (
    <footer className="flex h-10 shrink-0 items-stretch bg-[#101010] text-white">
      <button aria-label="Iniciar" className="flex w-12 items-center justify-center">
        <Ico><path d="M0 2.300 6.600 1.400v6.200H0zM7.400 1.300 16 0v7.600H7.400zM0 8.400h6.600v6.200L0 13.700zM7.400 8.400H16V16l-8.600-1.300z" fill="#fff" /></Ico>
      </button>
      <button aria-label="Microsoft Edge" className={`${app} relative ml-[2px]`}>
        <Ico s={25} vb="0 0 24 24">
          <defs><linearGradient id="edge" x1="0" y1="0" x2="1" y2=".3"><stop offset="0" stopColor="#2aa3e0" /><stop offset="1" stopColor="#59d66a" /></linearGradient></defs>
          <circle cx="12" cy="12" r="11.800" fill="#1467b8" />
          <path d="M12 0c7 0 12 5 12 10 0 4-3 6-6.500 6-3 0-4-1.200-3-2.500C16 10 13 7.500 9.500 7.500 5 7.500 1 10 .3 13-.8 6 4.500 0 12 0z" fill="url(#edge)" />
          <path d="M14.500 13.500c-1 1.300 0 2.500 3 2.500 2.500 0 4.800-1 6-3l.5 4-3 1.500c-5 1.500-9.500-1-9-6 .2-1.500 1-2.500 2-2.500 1 1 1.300 2.200.5 3.500z" fill="#101010" />
          <circle cx="6" cy="18" r="5.500" fill="#a9a9a9" /><circle cx="6" cy="16.500" r="2" fill="#f1f1f1" /><path d="M2.500 21.500c.5-3 6.500-3 7 0z" fill="#f1f1f1" />
        </Ico>
        <i className="absolute bottom-0 h-[2px] w-10 bg-[#9fdcf5]" />
      </button>
      <button aria-label="Jaspersoft Studio" className={`${app} relative`}>
        <Jasper s={25} />
        <i className="absolute bottom-0 h-[2px] w-10 bg-[#9fdcf5]" />
      </button>
      <button aria-label="Paint" className={`${app} relative bg-[#333]`}>
        <Ico s={25}>
          <path d="M7.500 3.500C3.500 3.500 1 6 1 9s2.500 5 6 5c2 0 1.200-2 2.500-2.800 1.400-.9 4 .3 4-3C13.500 5 11 3.500 7.500 3.500z" fill="#cfe6f6" />
          <circle cx="4" cy="8" r="1.200" fill="#e0463c" /><circle cx="6.500" cy="5.800" r="1.100" fill="#e9922b" /><circle cx="9.300" cy="5.800" r="1.100" fill="#7cc142" /><circle cx="7.500" cy="9" r="1" fill="#22303e" />
          <path d="M8.500 14 12 5" stroke="#d08b3c" strokeWidth="1.400" /><path d="M11.500 5c-.6-2 1-3 3.200-3.500.3 1.500-.2 3.500-1.700 4.200z" fill="#b98a55" />
        </Ico>
        <i className="absolute inset-x-0 bottom-0 h-[2px] bg-[#9fdcf5]" />
      </button>
      <div className="flex flex-1 items-center justify-end">
        <i className="size-[18px] rounded-full bg-linear-to-br from-[#ffd95c] to-[#ff9a0a]" />
        <span className="ml-3 text-[13px] text-[#d0d0d0]">11°C</span>
        <span className="ml-[9px] text-[13px] text-[#d0d0d0]">Ensolarado</span>
        <button aria-label="Ícones ocultos" className="mr-[6px] ml-[18px]"><Ico s={12} vb="0 0 12 12"><path d="m1 8.500 5-5 5 5" stroke="#fff" strokeWidth="1.200" /></Ico></button>
        <div className="flex w-[68px] flex-col text-center leading-[18px]"><span>11:13</span><span>30/06/2021</span></div>
        <button aria-label="Notificações" className="ml-[14px] flex"><Ico s={18} vb="0 0 18 18"><path d="M1.500 2.500h15v11H12l-2.500 2.500L7 13.500H1.500z" stroke="#fff" strokeWidth="1.200" /></Ico></button>
        <i className="ml-5 mr-[3px] h-full w-px bg-[#4a4a4a]" />
      </div>
    </footer>
  );
}

export default function App() {
  return (
    <div className="flex h-screen flex-col overflow-hidden bg-[#f0f0f0] font-['Open_Sans','Noto_Sans',sans-serif] text-[11px] leading-4">
      <Ribbon />
      <main className="flex min-h-0 flex-1 flex-col">
        <div className="flex min-h-0 flex-1">
          <div className="flex min-w-0 flex-1 bg-[#c8d3e4] pt-[5px] pl-[5px]"><Studio /></div>
          <div className="flex w-4 shrink-0 flex-col items-center bg-[#f0f0f0]">
            <span className="flex h-[17px] items-center"><Chevron dir="up" /></span>
            <i className="w-[15px] flex-[649] bg-[#cdcdcd]" />
            <span className="flex flex-[193] items-end"><Chevron dir="down" /></span>
          </div>
        </div>
        <div className="flex h-[17px] shrink-0 items-center pt-px">
          <span className="flex w-[17px] justify-center"><Chevron dir="left" /></span>
          <i className="h-[15px] flex-[1842] bg-[#cdcdcd]" />
          <span className="flex flex-[61] justify-end"><span className="mr-5 flex"><Chevron dir="right" /></span></span>
        </div>
      </main>
      <StatusBar />
      <Taskbar />
    </div>
  );
}
